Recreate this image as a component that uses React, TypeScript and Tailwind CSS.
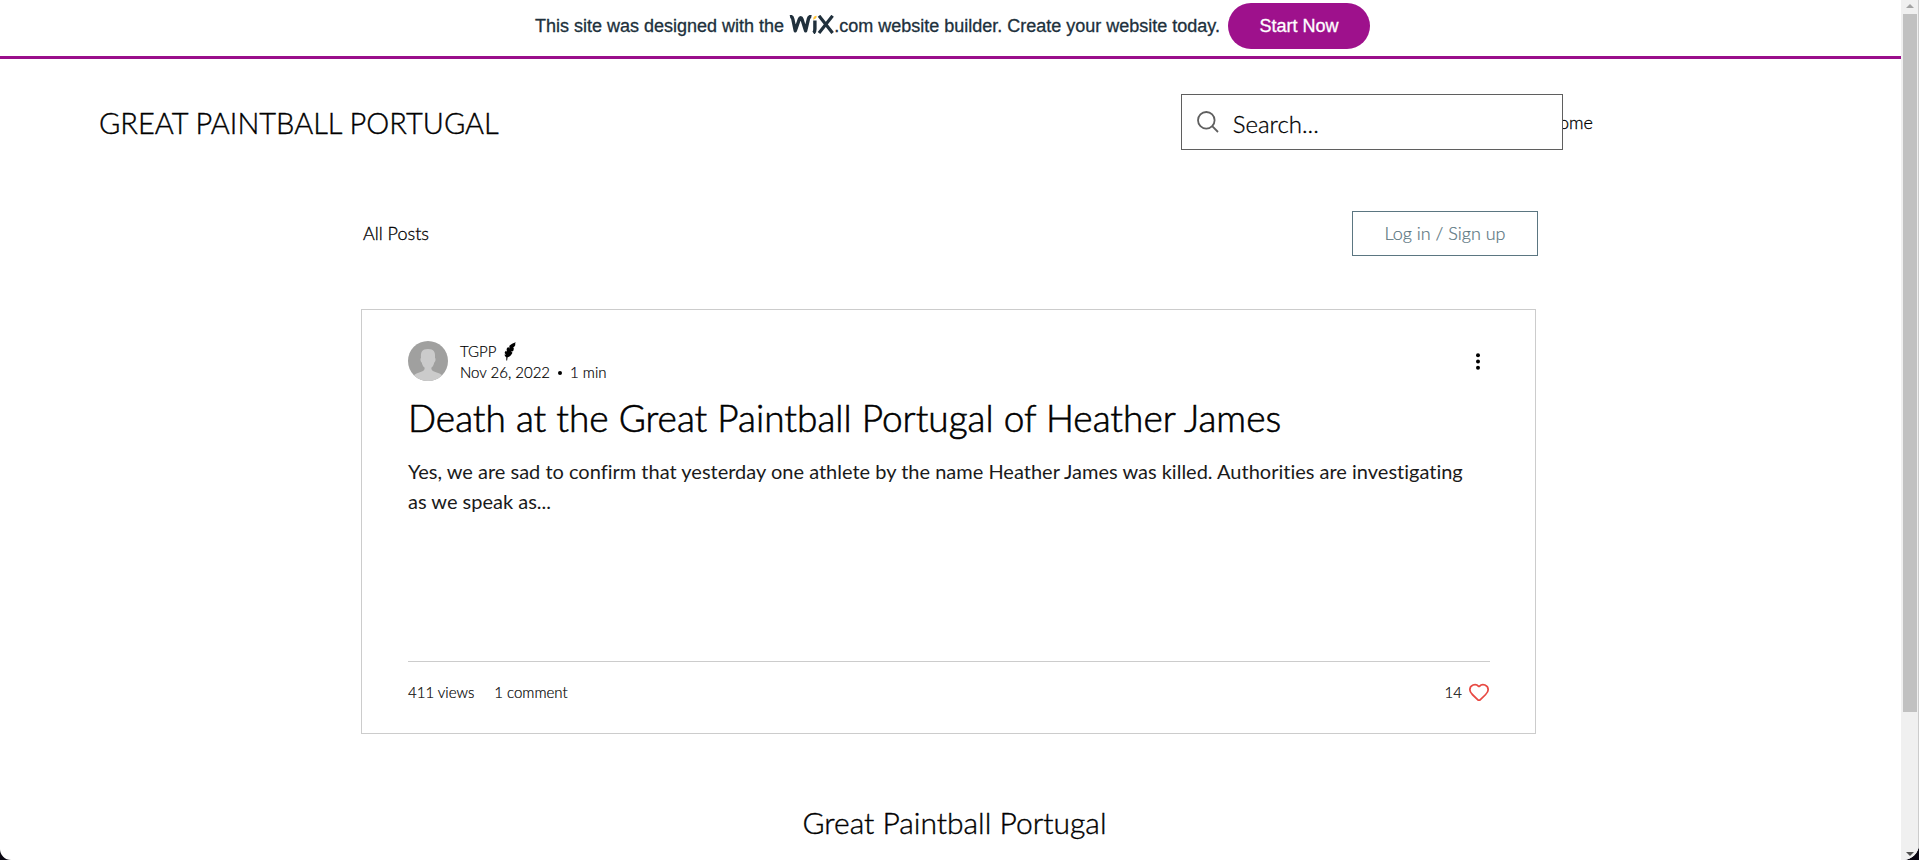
import { Heart } from "lucide-react";

function WixLogo() {
  return (
    <svg viewBox="0 0 45 19" className="h-[19px] w-[45px] -translate-y-0.5" role="img" aria-label="Wix">
      <g fill="none" stroke="#20303c" strokeLinejoin="round">
        <path d="M1 1.6C2.5 1.3 3.4 2.2 3.8 4L6.3 15.8L10.3 4.2C11 2.2 12.4 2.2 13 4.2L16.6 15.8L19.4 4C19.8 2.2 20.8 1.3 22.4 1.6" strokeWidth="3.4" />
        <path d="M25.9 5.600V14C25.9 16 25.6 17.2 24.4 18" strokeWidth="3.4" />
        <path d="M30 .8L43.6 18M43.6 .8L30 18" strokeWidth="3.2" />
      </g>
      <path d="M24.2 4.8C24.2 1.8 25.4 .8 27.6 .8C27.8 3 26.8 4 24.2 4.8Z" fill="#ffc233" />
    </svg>
  );
}

function PromoBar() {
  return (
    <div className="flex h-[59px] shrink-0 justify-center gap-2 border-b-[3px] border-[#9a0f8b] pt-[3px] pb-[7px] pl-1 font-['Liberation_Sans',Arial,sans-serif] text-lg leading-6 text-[#20303c]">
      <p className="flex items-center whitespace-pre [-webkit-text-stroke:0.3px]">
        This site was designed with the <WixLogo />
        .com website builder. Create your website today.
      </p>
      <button className="w-[142px] rounded-[23px] bg-[#9e118c] text-white [-webkit-text-stroke:0.3px]">Start Now</button>
    </div>
  );
}

function Header() {
  return (
    <header className="flex items-center justify-between pt-[35px] pr-[308px] pl-[99px]">
      <a href="#" className="pt-0.5 text-[29px] leading-9 font-light text-black [-webkit-text-stroke:0.4px]">GREAT PAINTBALL PORTUGAL</a>
      <div className="flex items-center">
        <label className="z-10 flex h-14 w-[382px] items-center gap-3.5 border border-[#5f5f5f] bg-white pl-[15px]">
          <svg viewBox="0 0 22 22" className="size-[22px]" fill="none" stroke="#5f5f5f" strokeWidth="1.8" aria-hidden="true">
            <circle cx="9.300" cy="9.300" r="8.300" />
            <path d="M15.200 15.200L21 21" />
          </svg>
          <input type="search" aria-label="Search" placeholder="Search..." className="min-w-0 flex-1 pt-1 text-2xl font-light text-black outline-none [-webkit-text-stroke:0.3px] placeholder:text-black" />
        </label>
        <nav className="-ml-[17px]">
          <a href="#" className="text-[18px] font-light text-black [-webkit-text-stroke:0.3px]">Home</a>
        </nav>
      </div>
    </header>
  );
}

function Avatar() {
  return (
    <svg viewBox="0 0 40 40" className="size-10 rounded-full" aria-hidden="true">
      <rect width="40" height="40" fill="#a0a09f" />
      <path d="M13 17C12.500 11 14 8 20 8S27.500 11 27 17C28 17.500 27.500 21 26.300 21.400C25.700 24 24.700 25.600 23.300 26.800C23.300 31 28 31 31.500 32.500C34 33.500 35 35 36 40H4C5 35 6 33.500 8.500 32.500C12 31 16.700 31 16.700 26.800C15.300 25.600 14.300 24 13.700 21.400C12.500 21 12 17.500 13 17Z" fill="#cbcbcb" />
    </svg>
  );
}

function Quill() {
  return (
    <svg viewBox="0 0 12 19" className="h-[19px] w-3" aria-hidden="true">
      <path d="M11.700 .3L11 2.200L11.500 2.800C11 4 10 5 9.200 5.600L9.800 6.200C9.800 7.500 9.500 8.500 9 9.200L7 9.600L8.500 10.800C7.500 12.700 6.500 14 4.500 15L3.600 15.200L3.100 18.600L2.300 18.400L2.300 15.200C1.300 14.800 .6 13.800 .5 12.600L2 12.800L.6 10.900C.8 9.900 1.200 9.300 1.900 8.700L2.900 9.700L2.600 7C3 6 3.600 5.400 4.300 5.100L5.300 6.500L5.400 3.800C7 2.300 9 1 11.700 .3Z" />
    </svg>
  );
}

function PostCard() {
  return (
    <article className="mr-1 flex h-[425px] flex-col border border-[#ccc] pt-[31px] pr-[45px] pl-[46px]">
      <div className="flex items-start">
        <Avatar />
        <div className="ml-3 text-[15px] leading-[21px] font-light text-black [-webkit-text-stroke:0.2px]">
          <div className="flex items-center gap-2">TGPP <Quill /></div>
          <div className="flex items-center gap-2">
            <span>Nov 26, 2022</span>
            <span className="size-1 rounded-full bg-black" />
            <span>1 min</span>
          </div>
        </div>
        <button aria-label="More actions" className="ml-auto flex h-10 w-6 items-center justify-center">
          <svg viewBox="0 0 4 17" className="h-[17px] w-1">
            <circle cx="2" cy="2.300" r="2" />
            <circle cx="2" cy="8.500" r="2" />
            <circle cx="2" cy="14.700" r="2" />
          </svg>
        </button>
      </div>
      <h2 className="mt-[13px] text-[37px] leading-11 font-light text-black [-webkit-text-stroke:0.6px]">
        <a href="#">Death at the Great Paintball Portugal of Heather James</a>
      </h2>
      <p className="mt-4 pr-4 text-xl leading-[30px] text-[#1a1a1a]">
        Yes, we are sad to confirm that yesterday one athlete by the name Heather James was killed. Authorities are investigating as we speak as...
      </p>
      <div className="mt-auto flex h-[72px] gap-5 border-t border-[#ccc] pt-5 text-[15px] leading-[21px] font-light text-black [-webkit-text-stroke:0.2px]">
        <span>411 views</span>
        <a href="#">1 comment</a>
        <button className="ml-auto flex h-5 items-center gap-1.5">
          14 <Heart className="size-[22px] text-[#e84a43]" strokeWidth={1.9} />
        </button>
      </div>
    </article>
  );
}

function ScrollTrack() {
  return (
    <div className="flex w-[18px] shrink-0 flex-col items-center justify-between border-r border-[#ccc] bg-[#f0f0f0]" aria-hidden="true">
      <div className="flex flex-col items-center gap-1.5 pt-1">
        <svg viewBox="0 0 8 4" className="h-1 w-2"><path d="M4 0L8 4H0Z" fill="#a3a3a3" /></svg>
        <div className="h-[698px] w-3.5 bg-[#c1c1c1]" />
      </div>
      <svg viewBox="0 0 8 4" className="mb-1 h-1 w-2"><path d="M0 0H8L4 4Z" fill="#505050" /></svg>
    </div>
  );
}

export default function App() {
  return (
    <div className="bg-[#0a0712]">
      <div className="flex h-screen overflow-hidden rounded-br-[16px] rounded-bl-[11px] bg-white font-[Lato,sans-serif] [font-variant-ligatures:no-common-ligatures]">
        <div className="flex min-w-0 flex-1 flex-col overflow-hidden">
          <PromoBar />
          <Header />
          <main className="mx-auto w-full max-w-[1179px] pt-[61px]">
            <div className="mr-0.5 mb-[53px] flex h-[45px] items-center justify-between">
              <a href="#" className="pl-0.5 text-[18px] font-light text-black [-webkit-text-stroke:0.3px]">All Posts</a>
              <button className="h-[45px] w-[186px] border border-[#5b7681] text-[18px] font-light text-[#5b7681] [-webkit-text-stroke:0.2px]">Log in / Sign up</button>
            </div>
            <PostCard />
          </main>
          <footer className="pt-[70px] pl-2 text-center text-[30px] leading-9 font-light text-black [-webkit-text-stroke:0.4px]">Great Paintball Portugal</footer>
        </div>
        <ScrollTrack />
      </div>
    </div>
  );
}
